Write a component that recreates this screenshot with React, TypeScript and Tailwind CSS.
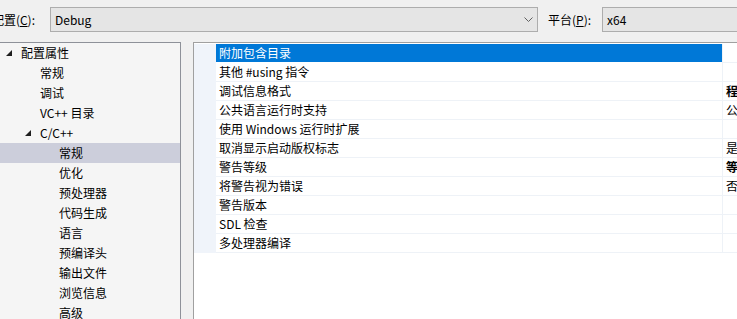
import React from "react";

const tree: { label: string; level: number; expander?: boolean; selected?: boolean }[] = [
    { label: "配置属性", level: 0, expander: true },
    { label: "常规", level: 1 },
    { label: "调试", level: 1 },
    { label: "VC++ 目录", level: 1 },
    { label: "C/C++", level: 1, expander: true },
    { label: "常规", level: 2, selected: true },
    { label: "优化", level: 2 },
    { label: "预处理器", level: 2 },
    { label: "代码生成", level: 2 },
    { label: "语言", level: 2 },
    { label: "预编译头", level: 2 },
    { label: "输出文件", level: 2 },
    { label: "浏览信息", level: 2 },
    { label: "高级", level: 2 },
];

const props: { name: string; value?: string; bold?: boolean; selected?: boolean }[] = [
    { name: "附加包含目录", selected: true },
    { name: "其他 #using 指令" },
    { name: "调试信息格式", value: "程序数据库 (/Zi)", bold: true },
    { name: "公共语言运行时支持", value: "公共语言运行时支持 (/clr)" },
    { name: "使用 Windows 运行时扩展" },
    { name: "取消显示启动版权标志", value: "是 (/nologo)" },
    { name: "警告等级", value: "等级 3 (/W3)", bold: true },
    { name: "将警告视为错误", value: "否 (/WX-)" },
    { name: "警告版本" },
    { name: "SDL 检查" },
    { name: "多处理器编译" },
];

const indent = ["pl-[21px]", "pl-[40px]", "pl-[59px]"];
const arrowPos = ["left-[6px]", "left-[25px]", "left-[44px]"];

function Chevron() {
    return (
        <svg width="9" height="5" viewBox="0 0 9 5" className="shrink-0">
            <path d="M0.5 0.5 L4.5 4.5 L8.5 0.5" fill="none" stroke="#606060" strokeWidth="1" />
        </svg>
    );
}

export default function App() {
    return (
        <div className="w-[737px] h-[319px] overflow-hidden bg-[#f0f0f0] text-[12px] text-black font-['Noto_Sans_CJK_SC',sans-serif]">
            {/* config / platform row */}
            <div className="flex items-center pt-[7px] h-[32px]">
                <span className="w-[38px] ml-[-3px] mr-[15px] flex justify-end whitespace-nowrap shrink-0">
                    <span>配置(<span className="underline">C</span>):</span>
                </span>
                <div className="w-[488px] h-[25px] shrink-0 bg-[#e5e5e5] border border-[#adadad] flex items-center pl-[4px] pr-[4px]">
                    <span className="flex-1">Debug</span>
                    <Chevron />
                </div>
                <span className="w-[42px] ml-[10px] mr-[12px] whitespace-nowrap shrink-0">
                    平台(<span className="underline">P</span>):
                </span>
                <div className="w-[160px] h-[25px] shrink-0 bg-[#e5e5e5] border border-[#adadad] flex items-center pl-[4px]">
                    x64
                </div>
            </div>

            <div className="flex mt-[10px] h-[277px]">
                {/* category tree */}
                <div className="w-[181px] shrink-0 bg-[#f5f5f5] border-t border-r border-[#8e9199]">
                    {tree.map((t, i) => (
                        <div
                            key={i}
                            className={`relative h-[20px] leading-[20px] whitespace-nowrap ${indent[t.level]} ${t.selected ? "bg-[#cccedb]" : ""}`}
                        >
                            {t.expander && (
                                <svg width="6" height="6" viewBox="0 0 6 6" className={`absolute top-[7px] ${arrowPos[t.level]}`}>
                                    <polygon points="6,0 6,6 0,6" fill="#1e1e1e" />
                                </svg>
                            )}
                            {t.label}
                        </div>
                    ))}
                </div>

                {/* property grid */}
                <div className="flex-1 ml-[12px] bg-white border-t border-l border-[#a0a0a0] pt-[1px]">
                    <div className="flex flex-col w-[560px]">
                        {props.map((p, i) => (
                            <div key={i} className="flex h-[19px] bg-[#f0f4fa]">
                                <div className="w-[22px] shrink-0" />
                                <div
                                    className={`w-[506px] shrink-0 pl-[3px] leading-[18px] whitespace-nowrap border-b ${p.selected ? "bg-[#0078d7] text-white border-white" : "bg-white border-[#eef2f7]"}`}
                                >
                                    {p.name}
                                </div>
                                <div
                                    className={`flex-1 pl-[3px] leading-[18px] whitespace-nowrap overflow-hidden bg-white border-l border-b border-[#eef2f7] ${p.bold ? "font-bold" : ""}`}
                                >
                                    {p.value ?? ""}
                                </div>
                            </div>
                        ))}
                    </div>
                </div>
            </div>
        </div>
    );
}
